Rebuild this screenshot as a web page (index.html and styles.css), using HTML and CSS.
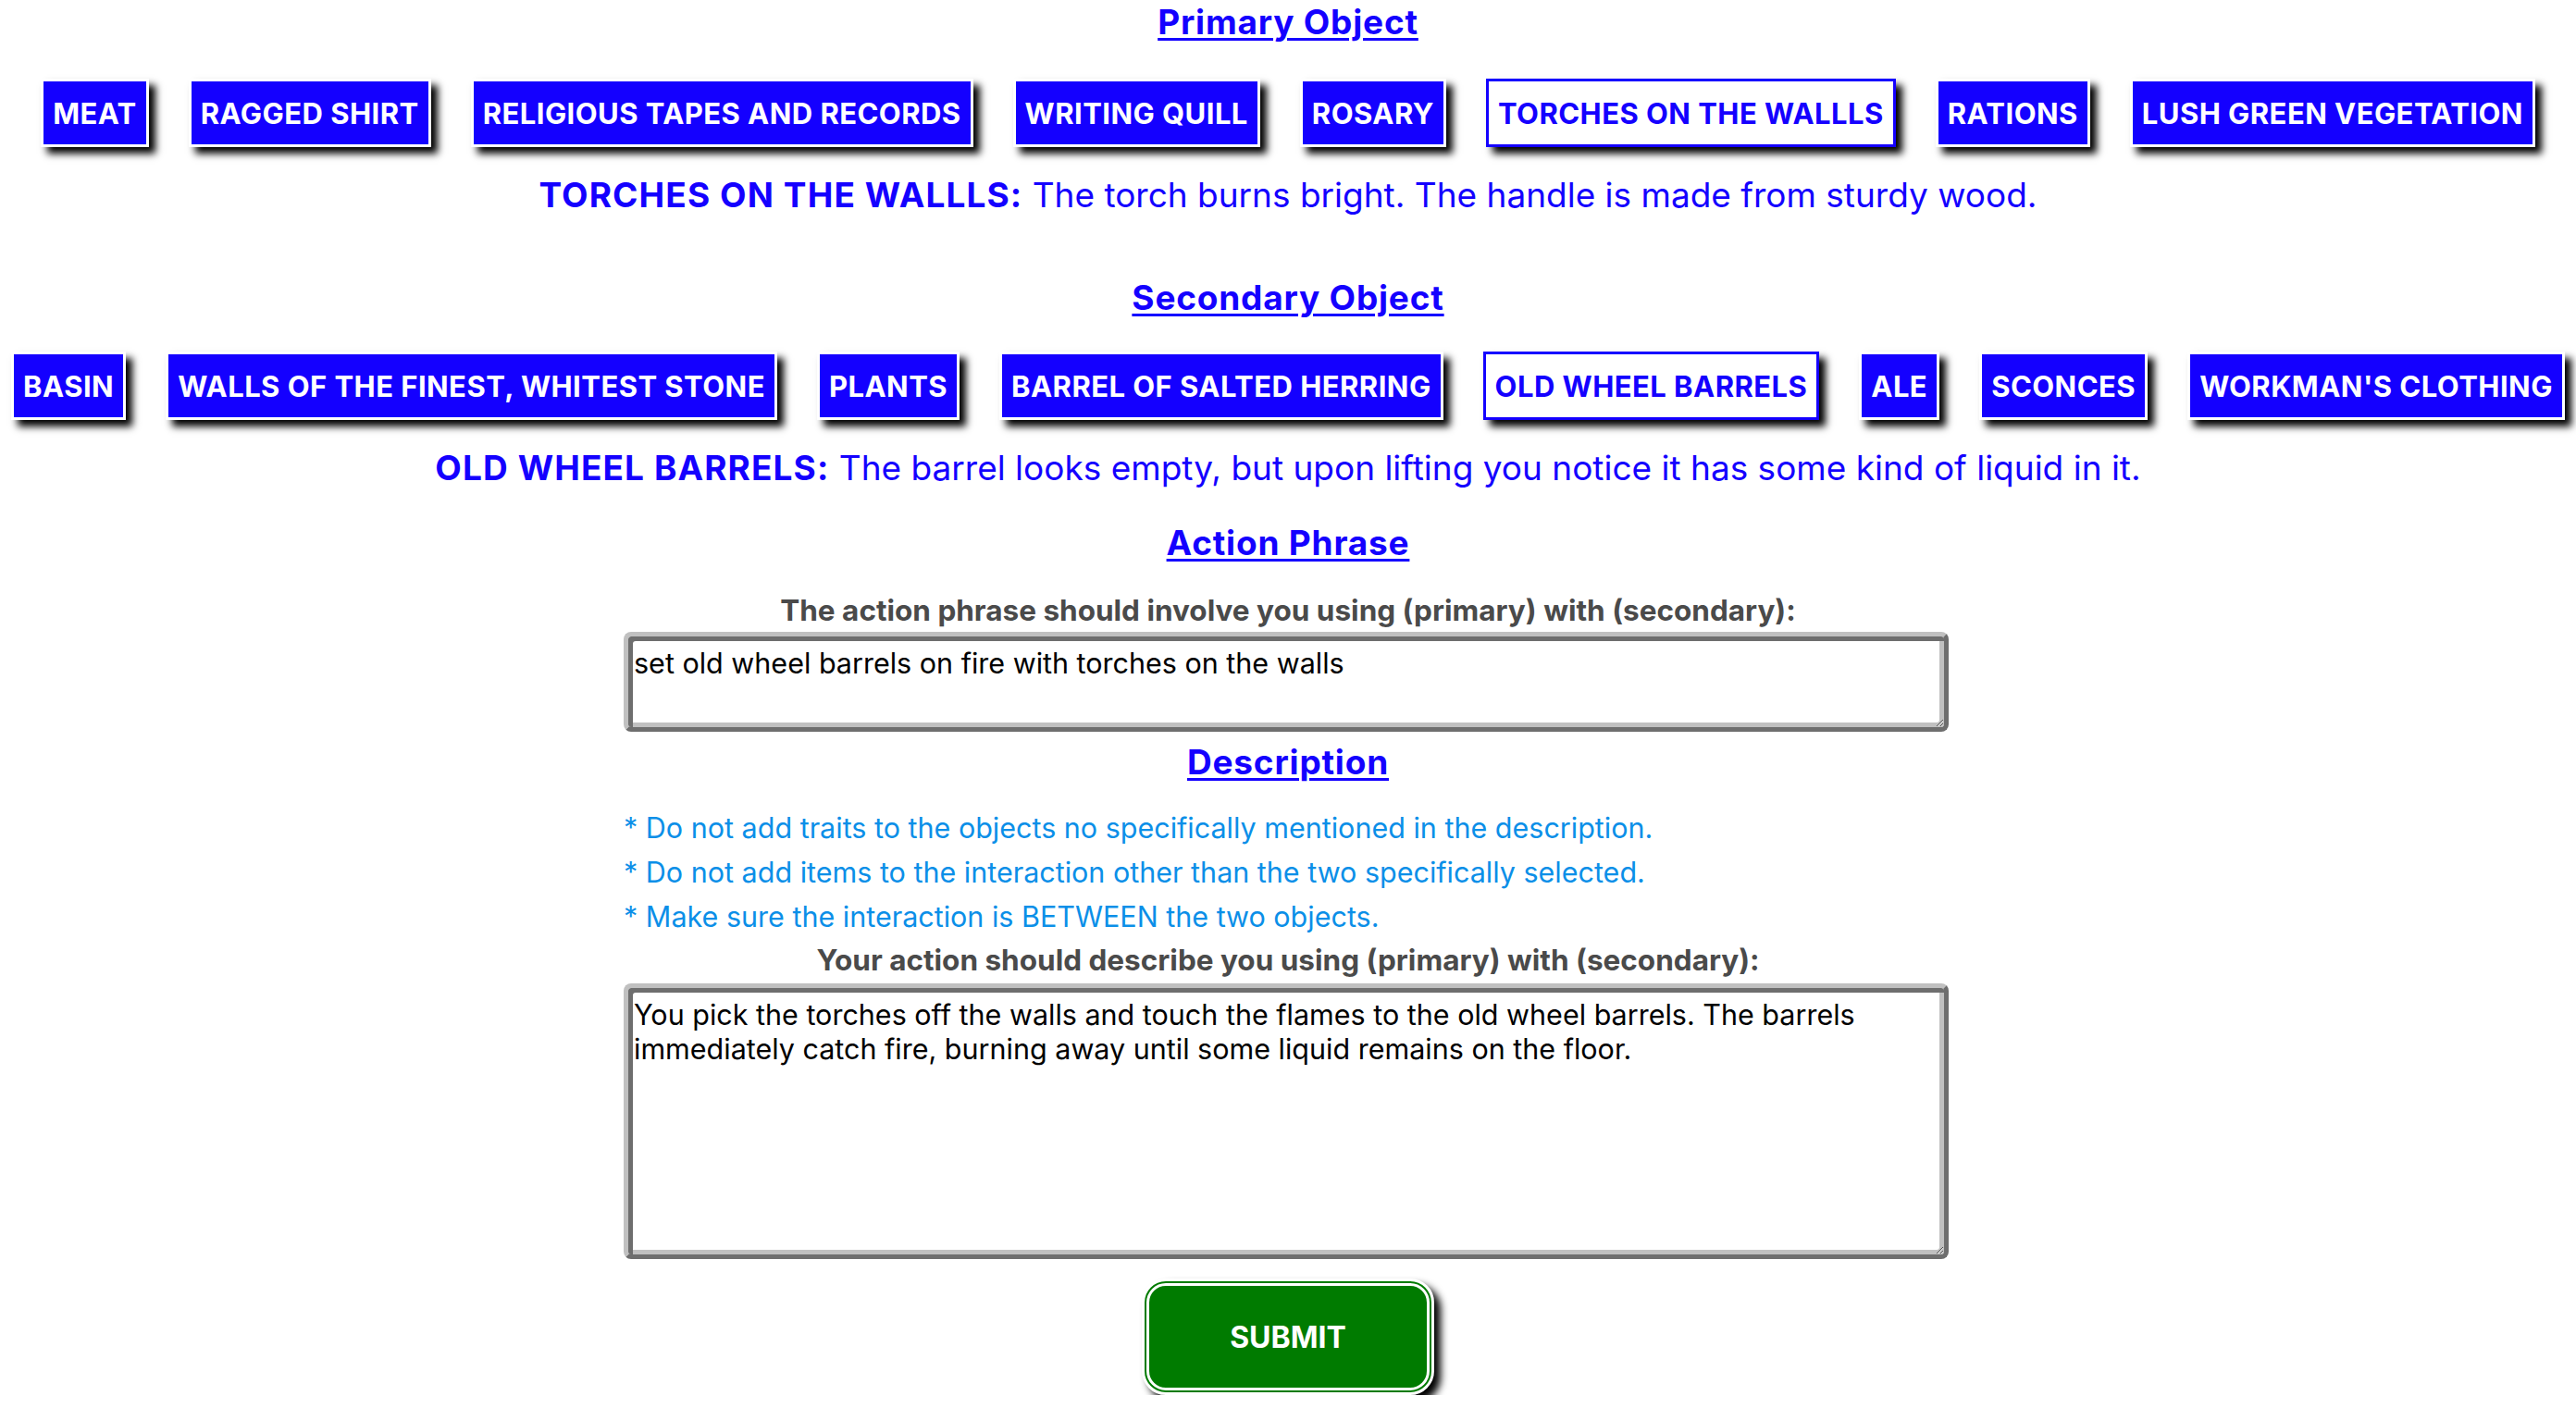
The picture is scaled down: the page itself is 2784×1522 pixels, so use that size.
FILE: index.html
```html
<!DOCTYPE html>
<html lang="en">
<head>
<meta charset="utf-8">
<title>Action Builder</title>
<link rel="stylesheet" href="styles.css">
</head>
<body>
<main class="page">
  <h2 class="section-title title-primary">Primary Object</h2>
  <div class="choices row-primary">
    <button class="choice">MEAT</button>
    <button class="choice">RAGGED SHIRT</button>
    <button class="choice">RELIGIOUS TAPES AND RECORDS</button>
    <button class="choice">WRITING QUILL</button>
    <button class="choice">ROSARY</button>
    <button class="choice selected">TORCHES ON THE WALLLS</button>
    <button class="choice">RATIONS</button>
    <button class="choice">LUSH GREEN VEGETATION</button>
  </div>
  <p class="object-desc"><b>TORCHES ON THE WALLLS:</b> The torch burns bright. The handle is made from sturdy wood.</p>

  <h2 class="section-title title-secondary">Secondary Object</h2>
  <div class="choices row-secondary">
    <button class="choice">BASIN</button>
    <button class="choice">WALLS OF THE FINEST, WHITEST STONE</button>
    <button class="choice">PLANTS</button>
    <button class="choice">BARREL OF SALTED HERRING</button>
    <button class="choice selected">OLD WHEEL BARRELS</button>
    <button class="choice">ALE</button>
    <button class="choice">SCONCES</button>
    <button class="choice">WORKMAN'S CLOTHING</button>
  </div>
  <p class="object-desc"><b>OLD WHEEL BARRELS:</b> The barrel looks empty, but upon lifting you notice it has some kind of liquid in it.</p>

  <h2 class="section-title title-action">Action Phrase</h2>
  <div class="label label-action">The action phrase should involve you using (primary) with (secondary):</div>
  <textarea class="field field-short">set old wheel barrels on fire with torches on the walls</textarea>

  <h2 class="section-title title-desc">Description</h2>
  <ul class="rules">
    <li>* Do not add traits to the objects no specifically mentioned in the description.</li>
    <li>* Do not add items to the interaction other than the two specifically selected.</li>
    <li>* Make sure the interaction is BETWEEN the two objects.</li>
  </ul>
  <div class="label label-desc">Your action should describe you using (primary) with (secondary):</div>
  <textarea class="field field-long">You pick the torches off the walls and touch the flames to the old wheel barrels. The barrels immediately catch fire, burning away until some liquid remains on the floor.</textarea>

  <button class="submit">SUBMIT</button>
</main>
</body>
</html>
```

FILE: styles.css
```css
html, body {
  margin: 0;
  padding: 0;
  background: #ffffff;
}

body {
  font-family: Inter, "Noto Sans", "Liberation Sans", sans-serif;
  color: #1400ff;
}

.page {
  display: flex;
  flex-direction: column;
  align-items: center;
  width: 100%;
}

.section-title {
  margin: 0;
  font-size: 37px;
  line-height: 48px;
  font-weight: 700;
  letter-spacing: 0.8px;
  color: #1400ff;
  text-decoration: underline;
  text-decoration-thickness: 3px;
  text-underline-offset: 4px;
}

.title-secondary { margin-top: 64px; }
.title-action { margin-top: 34px; }
.title-desc { margin-top: 9px; }

.choices {
  display: flex;
  flex-wrap: nowrap;
  justify-content: center;
  gap: 43px;
  width: 100%;
}

.row-primary { margin-top: 37px; }
.row-secondary { margin-top: 34px; }

.choice {
  flex: none;
  font-family: inherit;
  font-size: 31px;
  line-height: 36px;
  font-weight: 700;
  letter-spacing: 0.45px;
  color: #ffffff;
  background: #1400ff;
  border: 3px solid #ffffff;
  padding: 17px 10px 15px;
  margin: 0;
  box-shadow: 7px 7px 8px #000000;
  white-space: nowrap;
  cursor: pointer;
}

.choice.selected {
  background: #ffffff;
  color: #1400ff;
  border-color: #1400ff;
}

.object-desc {
  margin: 29px 0 0;
  font-size: 37px;
  line-height: 46px;
  font-weight: 400;
  color: #1400ff;
  text-align: center;
}

.object-desc b {
  font-weight: 700;
  letter-spacing: 1.1px;
}

.label {
  font-size: 31.5px;
  line-height: 36px;
  font-weight: 700;
  color: #4a4a4a;
  text-align: center;
}

.label-action { margin-top: 31px; }
.label-desc { margin-top: 5px; }

.field {
  box-sizing: border-box;
  width: 1432px;
  font-family: inherit;
  font-size: 30.5px;
  line-height: 37px;
  color: #000000;
  background: #ffffff;
  padding: 10px 6px 6px;
  border: 5px solid;
  border-color: #c0c0c0 #6e6e6e #6e6e6e #c0c0c0;
  border-radius: 8px;
  box-shadow: inset 5px 5px 0 #6e6e6e, inset -5px -5px 0 #c0c0c0;
  outline: none;
  margin: 0 4px 0 0;
  display: block;
}

.field-short {
  height: 108px;
  margin-top: 5px;
}

.field-long {
  height: 298px;
  margin-top: 7px;
}

.rules {
  list-style: none;
  margin: 23px 4px 0 0;
  padding: 0;
  width: 1432px;
  font-size: 30.5px;
  line-height: 48px;
  color: #0b8fe8;
}

.rules li {
  margin: 0;
}

.submit {
  margin-top: 21px;
  width: 316px;
  height: 126px;
  font-family: inherit;
  font-size: 32px;
  font-weight: 700;
  color: #ffffff;
  background: #007b00;
  border: 8px double #ffffff;
  border-radius: 26px;
  box-shadow: 7px 7px 8px #000000;
  cursor: pointer;
}
```
